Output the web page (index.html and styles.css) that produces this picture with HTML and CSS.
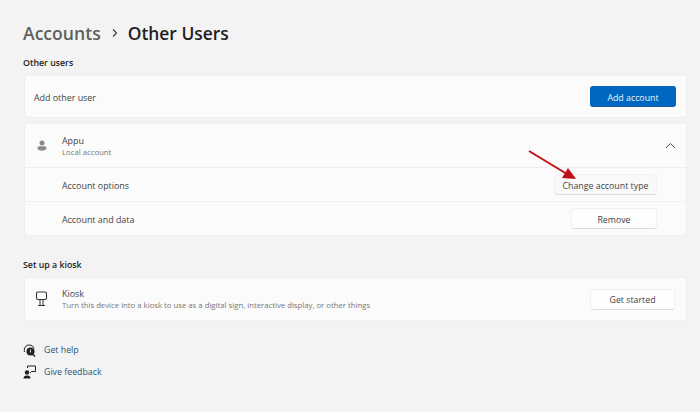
FILE: index.html
```html
<!DOCTYPE html>
<html lang="en">
<head>
<meta charset="utf-8">
<title>Other Users</title>
<link rel="stylesheet" href="styles.css">
</head>
<body>
<main class="page">
  <h1 class="title"><span class="crumb">Accounts</span>
    <svg class="crumb-sep" width="8" height="10" viewBox="0 0 8 10"><path d="M2 1.500 5.500 5 2 8.500" fill="none" stroke="#444" stroke-width="1.200"/></svg>
    <span class="current">Other Users</span></h1>
  <h2 class="section first">Other users</h2>
  <section class="card row-main add-row">
    <span class="label">Add other user</span>
    <button class="btn primary add">Add account</button>
  </section>
  <section class="card group">
    <div class="row-main head">
      <svg class="icon" width="12" height="14" viewBox="0 0 12 14"><circle cx="6" cy="4" r="2.500" fill="#8a8a8a"/><path d="M1.500 9c0-1 .8-1.700 1.800-1.700h5.400c1 0 1.800.7 1.800 1.700 0 1.800-2.200 2.700-4.500 2.700s-4.500-.9-4.500-2.700z" fill="#8a8a8a"/></svg>
      <div class="text"><div class="label">Appu</div><div class="sub">Local account</div></div>
      <svg class="chev" width="11" height="7" viewBox="0 0 11 7"><path d="M1 6 5.500 1.500 10 6" fill="none" stroke="#555" stroke-width="1"/></svg>
    </div>
    <div class="sub-row options"><span class="label">Account options</span><button class="btn change">Change account type</button></div>
    <div class="sub-row data"><span class="label">Account and data</span><button class="btn remove">Remove</button></div>
  </section>
  <h2 class="section second">Set up a kiosk</h2>
  <section class="card row-main kiosk">
    <svg class="icon" width="14" height="16" viewBox="0 0 14 16"><rect x="1.500" y="1" width="10" height="7.500" rx="1.500" fill="none" stroke="#333" stroke-width="1.100"/><path d="M5 8.500V14.500M8 8.500V14.500M3 14.500H10" fill="none" stroke="#333" stroke-width="1"/></svg>
    <div class="text"><div class="label">Kiosk</div><div class="sub">Turn this device into a kiosk to use as a digital sign, interactive display, or other things</div></div>
    <button class="btn start">Get started</button>
  </section>
  <nav class="links">
    <a class="link"><svg width="13" height="13" viewBox="0 0 13 13"><path d="M1.500 8C.5 4 3 1 6 1s4.500 1.500 5 3.500" fill="none" stroke="#222" stroke-width="1"/><circle cx="7.500" cy="7.500" r="4" fill="#222"/><path d="M10 10.500 12 12.500" stroke="#222" stroke-width="1.400"/><rect x="7" y="5.500" width="1" height="3" fill="#ddd"/></svg>Get help</a>
    <a class="link"><svg width="13" height="14" viewBox="0 0 13 14"><circle cx="4" cy="7.500" r="2.200" fill="#222"/><path d="M.5 13.500c0-2 1-3 3.500-3s3.500 1 3.500 3z" fill="#222"/><path d="M4.500 3V1h8v5.500H8.500L7 8" fill="none" stroke="#222" stroke-width="1"/></svg>Give feedback</a>
  </nav>
</main>
<svg class="arrow" width="52" height="34" viewBox="0 0 52 34"><path d="M2 2 40 25" stroke="#bf1018" stroke-width="2" fill="none"/><path d="M49 30 35 29 41 19z" fill="#bf1018"/></svg>
</body>
</html>
```
FILE: styles.css
```css
* { box-sizing: border-box; }
html, body { margin: 0; height: 100%; overflow: hidden; }
body { background: #f3f3f3; font-family: "Open Sans", "Noto Sans", sans-serif; color: #333; position: relative; }
.page { padding: 21px 13px 0 23px; width: 700px; }
.title { margin: 0; font-size: 17.600px; line-height: 24px; font-weight: 600; color: #1f1f1f; display: flex; align-items: center; gap: 9px; }
.crumb { color: #5f5f5f; }
.current { font-size: 17.400px; }
.crumb-sep { margin: 0 0 0 1px; }
.section { margin: 0; font-size: 8.800px; line-height: 12px; font-weight: 600; color: #222; }
.section.first { margin-top: 12px; }
.section.second { margin-top: 23px; }
.card { background: #fbfbfb; border: 1px solid #efefef; border-radius: 3px; margin-left: 1px; }
.row-main { display: flex; align-items: center; padding: 0 10px; }
.add-row { height: 43px; margin-top: 6px; }
.add-row > .label { flex: 1; padding-top: 2px; margin-left: -1px; }
.kiosk { height: 44px; margin-top: 6px; }
.group { margin-top: 5px; }
.group .head { height: 44px; border-bottom: 1px solid #eeeeee; }
.head .text { padding-top: 2px; }
.sub-row { display: flex; align-items: center; justify-content: space-between; padding: 0 29px 0 37px; }
.sub-row > .label { padding-top: 2px; }
.options { height: 34px; border-bottom: 1px solid #f1f1f1; }
.data { height: 33px; }
.icon { width: 14px; margin: 0 13px 0 0; flex: none; }
.text { flex: 1; }
.label { font-size: 8.900px; line-height: 12px; color: #444; }
.sub { font-size: 7.750px; line-height: 11px; color: #777; }
.btn { font-family: inherit; font-size: 8.800px; height: 21px; padding: 2px 0 0; border: 1px solid #f1f1f1; border-bottom-color: #dedede; border-radius: 3px; background: #fefefe; color: #444; }
.primary { background: #0067c0; border-color: #0067c0; border-bottom-color: #1a5a9c; color: #e8f3fb; }
.add { width: 86px; }
.change { width: 103px; background: #f9f9f9; }
.remove { width: 86px; }
.start { width: 85px; margin-right: 1px; }
.chev { flex: none; margin-right: 0; }
.links { margin-top: 22px; display: flex; flex-direction: column; gap: 8px; }
.link { display: flex; align-items: center; gap: 8px; font-size: 8.800px; line-height: 14px; color: #2c5573; }
.link svg { width: 13px; flex: none; }
.arrow { position: absolute; left: 527px; top: 149px; }
```
